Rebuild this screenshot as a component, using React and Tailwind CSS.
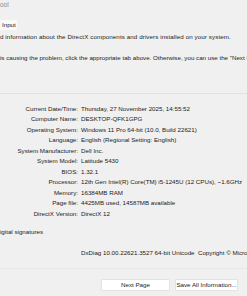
const rows = [
  ["Current Date/Time:", "Thursday, 27 November 2025, 14:55:52"],
  ["Computer Name:", "DESKTOP-QFK1GPG"],
  ["Operating System:", "Windows 11 Pro 64-bit (10.0, Build 22621)"],
  ["Language:", "English (Regional Setting: English)"],
  ["System Manufacturer:", "Dell Inc."],
  ["System Model:", "Latitude 5430"],
  ["BIOS:", "1.32.1"],
  ["Processor:", "12th Gen Intel(R) Core(TM) i5-1245U (12 CPUs), ~1.6GHz"],
  ["Memory:", "16384MB RAM"],
  ["Page file:", "4425MB used, 14587MB available"],
  ["DirectX Version:", "DirectX 12"],
];

export default function App() {
  return (
    <div
      className="w-[247px] h-[296px] overflow-hidden bg-[#f0f0f0] text-[6.2px] text-[#222] whitespace-nowrap"
      style={{ fontFamily: '"Liberation Sans", Arial, sans-serif' }}
    >
      {/* Title bar */}
      <div className="h-[10px] flex items-center text-[#8c8c8c] text-[6.5px]">ool</div>

      {/* Tab */}
      <div className="mt-[10px] h-[10px] w-[17px] bg-[#fafafa] flex items-center pl-[2px]">Input</div>

      {/* Intro */}
      <p className="mt-[2px] h-[10px] leading-[10px] tracking-[0.1px]">
        d information about the DirectX components and drivers installed on your system.
      </p>
      <p className="mt-[11px] h-[10px] leading-[10px]">
        is causing the problem, click the appropriate tab above. Otherwise, you can use the "Next Page"
      </p>

      <div className="mt-[30px] h-px bg-[#e2e2e2]" />

      {/* System information */}
      <div className="mt-[9px] flex flex-col">
        {rows.map(([label, value]) => (
          <div key={label} className="h-[10.5px] flex items-center">
            <span className="w-[78px] text-right">{label}</span>
            <span className="ml-[3px]">{value}</span>
          </div>
        ))}
      </div>

      <p className="mt-[8.5px] h-[10px] leading-[10px]">igital signatures</p>

      <p className="mt-[11px] h-[10px] leading-[10px] pl-[81px]">
        DxDiag 10.00.22621.3527 64-bit Unicode&nbsp; Copyright © Microsoft. All rights reserved.
      </p>

      <div className="mt-[10px] h-px bg-[#e6e6e6]" />

      {/* Buttons */}
      <div className="mt-[10px] flex justify-end gap-[5px] pr-[9px]">
        <button className="w-[69px] h-[12px] bg-white border border-[#e3e3e3] rounded-[1px] flex items-center justify-center">
          Next Page
        </button>
        <button className="w-[63px] h-[12px] bg-white border border-[#e3e3e3] rounded-[1px] flex items-center justify-center">
          Save All Information...
        </button>
      </div>
    </div>
  );
}
